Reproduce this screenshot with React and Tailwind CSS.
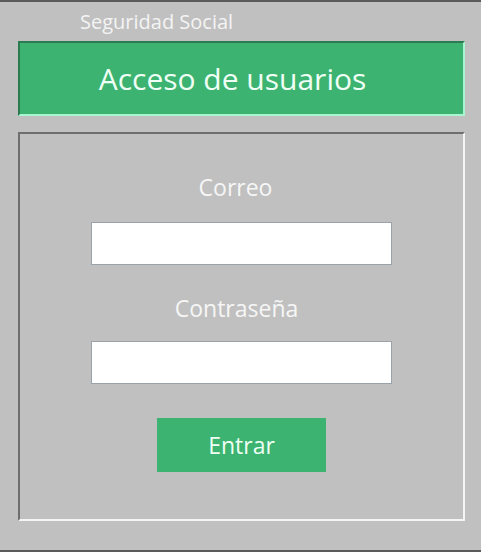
import React from 'react';

const App = () => {
  return (
    <div className="w-[481px] h-[552px] bg-[#c0c0c0] border-t-2 border-b-2 border-[#5a5a5a] flex flex-col font-['Open_Sans',sans-serif] overflow-hidden">
      {/* Site name */}
      <div className="h-[39px] pl-[80px] pt-[7px]">
        <span className="text-[20px] leading-[26px] text-[#f4f4f4]">Seguridad Social</span>
      </div>

      {/* Header */}
      <div className="ml-[18px] w-[447px] h-[75px] bg-[#3cb371] border-t-2 border-l-2 border-t-[#2b7a50] border-l-[#2b7a50] border-b-2 border-r-2 border-b-[#a8f5d0] border-r-[#a8f5d0] flex items-center justify-center pr-[18px]">
        <h1 className="text-[30px] text-[#effff5]">Acceso de usuarios</h1>
      </div>

      {/* Login form */}
      <form
        onSubmit={(e) => e.preventDefault()}
        className="mt-[16px] ml-[18px] w-[447px] h-[389px] border-t-2 border-l-2 border-t-[#6e6e6e] border-l-[#6e6e6e] border-b-2 border-r-2 border-b-[#f4f4f4] border-r-[#f4f4f4] flex flex-col items-center"
      >
        <label className="mt-[38px] mr-[12px] text-[23px] leading-[30px] text-[#f6f6f6]">Correo</label>
        <input
          type="email"
          className="mt-[20px] w-[301px] h-[43px] bg-white border border-[#9aa2aa] outline-none"
        />
        <label className="mt-[28px] mr-[10px] text-[23px] leading-[30px] text-[#f6f6f6]">Contraseña</label>
        <input
          type="password"
          className="mt-[18px] w-[301px] h-[43px] bg-white border border-[#9aa2aa] outline-none"
        />
        <button
          type="submit"
          className="mt-[34px] w-[169px] h-[54px] bg-[#3cb371] text-[23px] text-[#effff5]"
        >
          Entrar
        </button>
      </form>
    </div>
  );
};

export default App;
